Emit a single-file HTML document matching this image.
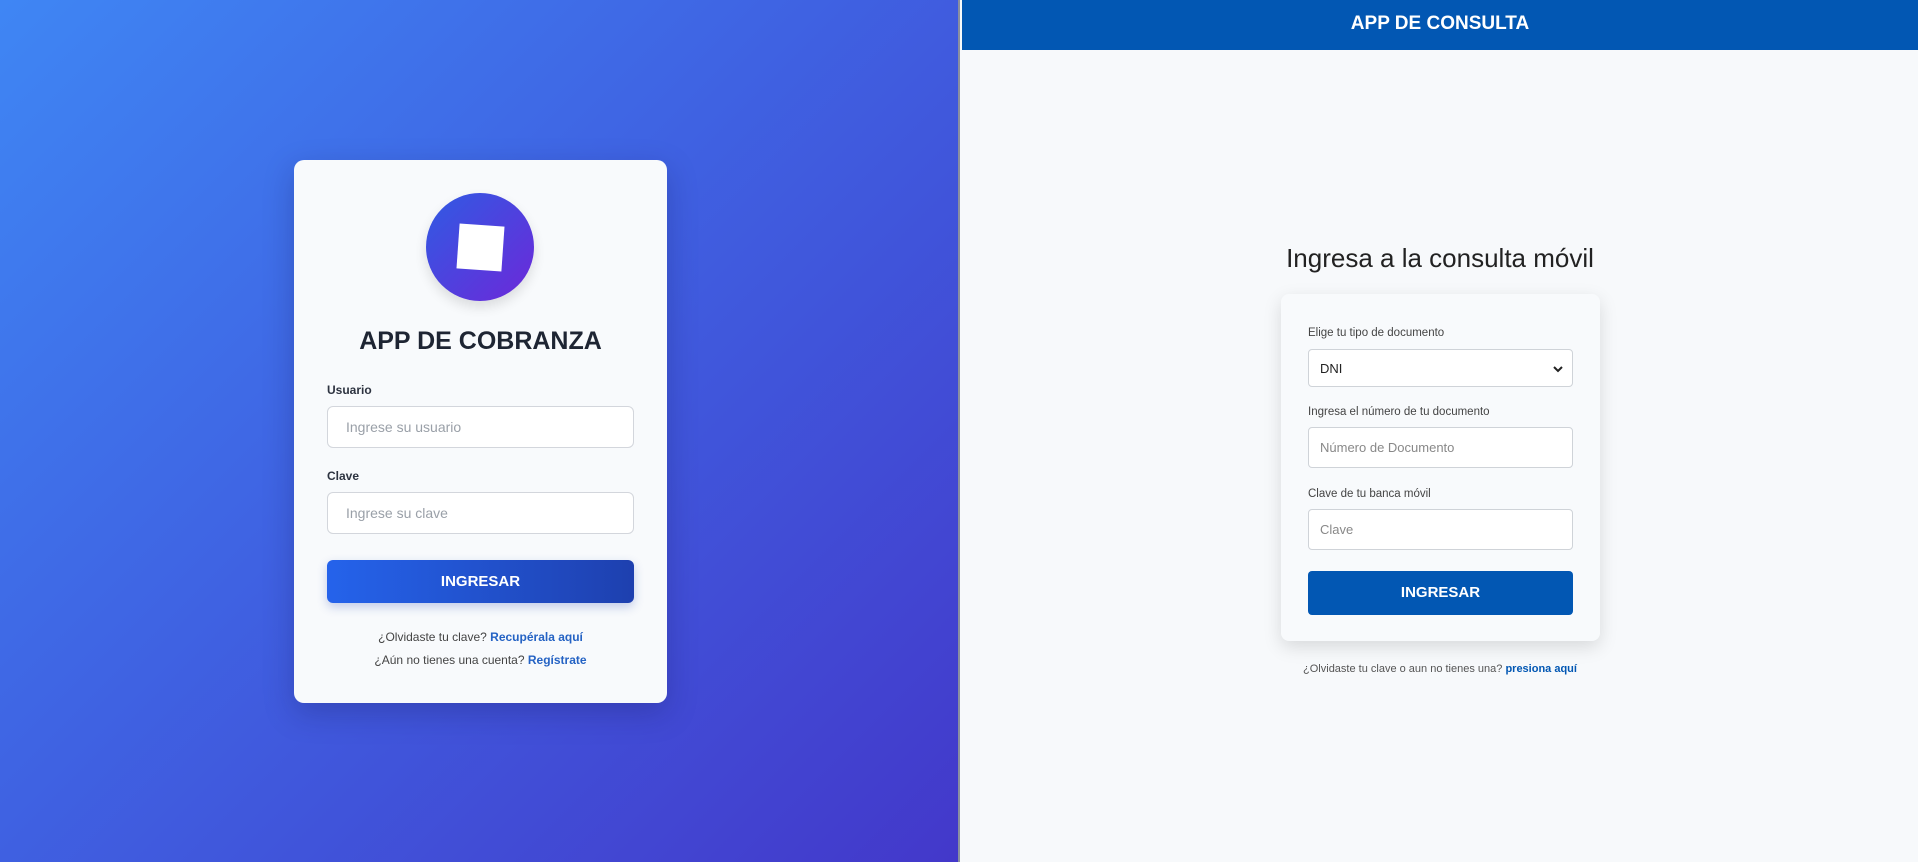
<!DOCTYPE html>
<html><head><meta charset="utf-8"><style>
*{box-sizing:border-box;margin:0;padding:0}
body{width:1918px;height:862px;overflow:hidden;font-family:"Liberation Sans",sans-serif;position:relative;background:#f7f9fb}
.left{position:absolute;left:0;top:0;width:960px;height:862px;background:linear-gradient(135deg,#3f86f4 0%,#3f62e2 45%,#4338ca 100%);border-right:2px solid #8a8fa0}
.card{position:absolute;left:294px;top:160px;width:373px;height:543px;background:#f8fafc;border-radius:10px;box-shadow:0 10px 30px rgba(20,20,80,.25)}
.circle{position:absolute;left:132px;top:33px;width:108px;height:108px;border-radius:50%;background:linear-gradient(135deg,#2f5be3,#6d28d9);box-shadow:0 6px 12px rgba(0,0,0,.12)}
.sq{position:absolute;left:32px;top:32px;width:45px;height:45px;background:#fff;transform:rotate(4deg)}
.title{position:absolute;left:0;width:100%;top:167px;text-align:center;font-size:25px;font-weight:bold;color:#1e2533}
.lbl{position:absolute;left:33px;font-size:12px;font-weight:bold;color:#2d3340}
.inp{position:absolute;left:33px;width:307px;height:42px;border:1px solid #d3d6dc;border-radius:6px;background:#fff;font-size:14px;color:#9aa0a8;padding:12px 18px}
.btn{position:absolute;left:33px;top:400px;width:307px;height:43px;border-radius:6px;background:linear-gradient(90deg,#2563eb,#1e40af);color:#fff;font-weight:bold;font-size:15px;text-align:center;line-height:43px;box-shadow:0 4px 10px rgba(30,64,175,.25)}
.small{position:absolute;left:0;width:100%;text-align:center;font-size:12px;color:#444}
.small b{color:#2563c4}
.hdr{position:absolute;left:962px;top:0;width:956px;height:50px;background:#0257b3;color:#fff;font-weight:bold;font-size:19px;text-align:center;line-height:48px}
.h2{position:absolute;left:1200px;width:480px;top:243px;text-align:center;font-size:26px;color:#222}
.card2{position:absolute;left:1281px;top:294px;width:319px;height:347px;background:#f8fafc;border-radius:8px;box-shadow:0 6px 18px rgba(0,0,0,.13)}
.l2{position:absolute;left:27px;font-size:11.5px;color:#444}
.i2{position:absolute;left:27px;width:265px;height:41px;border:1px solid #cfd3d8;border-radius:4px;background:#fff;font-size:13px;color:#888;padding:12px 11px}
.b2{position:absolute;left:27px;top:277px;width:265px;height:44px;background:#0257b3;border-radius:4px;color:#fff;font-weight:bold;font-size:15px;text-align:center;line-height:44px}
.foot{position:absolute;left:1200px;width:480px;top:663px;text-align:center;font-size:11px;color:#555}
.foot b{color:#0257b3}
</style></head><body>
<div class="left">
<div class="card">
<div class="circle"><div class="sq"></div></div>
<div class="title">APP DE COBRANZA</div>
<div class="lbl" style="top:223px">Usuario</div>
<div class="inp" style="top:246px">Ingrese su usuario</div>
<div class="lbl" style="top:309px">Clave</div>
<div class="inp" style="top:332px">Ingrese su clave</div>
<div class="btn">INGRESAR</div>
<div class="small" style="top:470px">¿Olvidaste tu clave? <b>Recupérala aquí</b></div>
<div class="small" style="top:493px">¿Aún no tienes una cuenta? <b>Regístrate</b></div>
</div>
</div>
<div class="hdr">APP DE CONSULTA</div>
<div class="h2">Ingresa a la consulta móvil</div>
<div class="card2">
<div class="l2" style="top:33px">Elige tu tipo de documento</div>
<div class="i2" style="top:55px;height:38px;color:#222;padding-top:11px">DNI<svg style="position:absolute;right:8px;top:14px" width="12" height="10" viewBox="0 0 12 10"><path d="M2 3l4 4 4-4" stroke="#222" stroke-width="2" fill="none"/></svg></div>
<div class="l2" style="top:112px">Ingresa el número de tu documento</div>
<div class="i2" style="top:133px">Número de Documento</div>
<div class="l2" style="top:194px">Clave de tu banca móvil</div>
<div class="i2" style="top:215px">Clave</div>
<div class="b2">INGRESAR</div>
</div>
<div class="foot">¿Olvidaste tu clave o aun no tienes una? <b>presiona aquí</b></div>
</body></html>
